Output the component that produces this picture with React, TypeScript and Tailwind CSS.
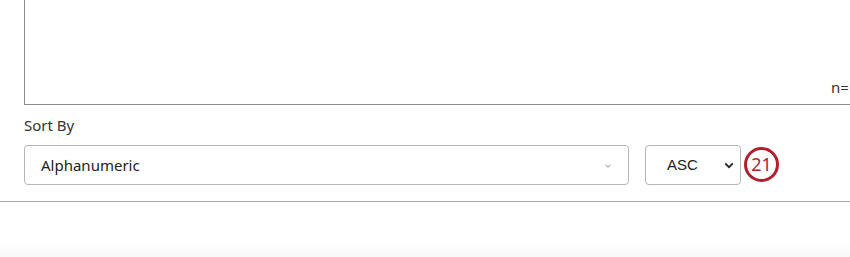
export default function App() {
  return (
    <div className="relative w-[850px] h-[257px] overflow-hidden bg-white" style={{ fontFamily: '"Noto Sans", "Open Sans", Arial, sans-serif' }}>
      <div className="ml-[24px] w-[850px] h-[105px] border-l border-b border-r border-[#8a8a8a] flex items-end">
        <span className="ml-[806px] mb-[8px] text-[15px] leading-[18px] text-[#333]">n=</span>
      </div>
      <div className="pl-[24px] pt-[10px] text-[15px] leading-[20px] text-[#333]">Sort By</div>
      <div className="pl-[24px] mt-[10px] flex items-center h-[40px]">
        <div className="w-[605px] h-[40px] border border-[#b5b5b5] rounded-[4px] flex items-center justify-between pl-[16px] pr-[17px]">
          <span className="text-[15px] text-[#222]">Alphanumeric</span>
          <svg width="6" height="4" viewBox="0 0 6 4" className="mt-[1px]">
            <path d="M0.5 0.8 L3 3.2 L5.5 0.8" fill="none" stroke="#8a8a8a" strokeWidth="1" />
          </svg>
        </div>
        <div className="ml-[16px] w-[96px] h-[40px] border border-[#b5b5b5] rounded-[4px] flex items-center justify-between pl-[21px] pr-[6px]">
          <span className="text-[15px] text-[#222] mt-[1px]" style={{ fontFamily: '"Liberation Sans", Arial, sans-serif' }}>ASC</span>
          <svg width="10" height="7" viewBox="0 0 10 7">
            <path d="M1.2 1.4 L5 5.2 L8.8 1.4" fill="none" stroke="#222" strokeWidth="1.8" />
          </svg>
        </div>
        <div className="ml-[3px] mb-[2px] w-[35px] h-[35px] rounded-full border-[3px] border-[#b21f2d] flex items-center justify-center">
          <span className="text-[18px] text-[#b21f2d] leading-none">21</span>
        </div>
      </div>
      <div className="mt-[16px] h-px bg-[#a8a8a8]"></div>
      <div className="absolute left-0 right-0 bottom-0 h-[14px] bg-gradient-to-b from-white to-[#f9f9f9]"></div>
    </div>
  );
}
